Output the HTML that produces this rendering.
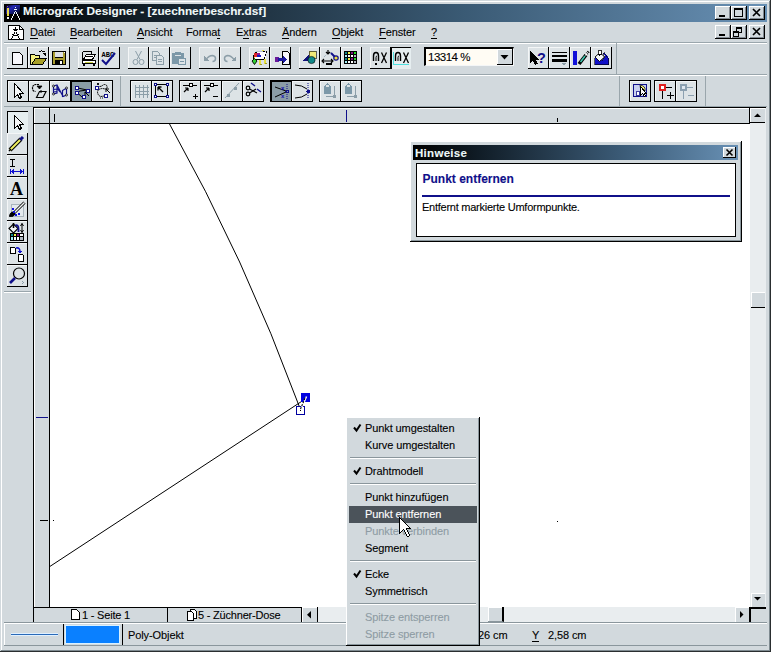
<!DOCTYPE html>
<html><head><meta charset="utf-8">
<style>
*{margin:0;padding:0;box-sizing:border-box}
html,body{width:771px;height:652px;overflow:hidden;background:#d2d9dd;font-family:"Liberation Sans",sans-serif;font-size:11px;color:#000}
.a{position:absolute}
.t{position:absolute;white-space:pre;line-height:1;letter-spacing:-0.1px;-webkit-text-stroke:0.1px currentColor}
u{text-decoration:none;border-bottom:1px solid #000;}
/* toolbar row1 buttons: dark right/bottom */
.b1{position:absolute;width:21px;height:22px;background:#dde3e6;border-right:1px solid #000;border-bottom:1px solid #000;box-shadow:inset 1px 1px #f4f6f7}
/* row2 buttons: full dark border */
.b2{position:absolute;width:22px;height:22px;background:#dde3e6;border:1px solid #000;box-shadow:inset 1px 1px #f4f6f7}
.pr{background:#8a9ca6;box-shadow:inset 1px 1px #000}
.tb{position:absolute;width:16px;height:14px;background:#d2d9dd;border-right:1px solid #000;border-bottom:1px solid #000;box-shadow:inset 1px 1px #fff, inset -1px -1px #808890}
svg{position:absolute;left:0;top:0;overflow:visible}
</style></head><body>
<!-- window frame -->
<div class="a" style="left:0;top:0;width:771px;height:652px;border-left:1px solid #d2d9dd;border-top:1px solid #d2d9dd;box-shadow:inset 1px 1px #fff"></div>
<div class="a" style="left:770px;top:0;width:1px;height:652px;background:#2a2e30"></div>
<div class="a" style="left:769px;top:1px;width:1px;height:650px;background:#7e8a90"></div>
<div class="a" style="left:0;top:651px;width:771px;height:1px;background:#2a2e30"></div>
<div class="a" style="left:1px;top:650px;width:769px;height:1px;background:#7e8a90"></div>

<!-- title bar -->
<div class="a" style="left:4px;top:4px;width:763px;height:18px;background:linear-gradient(90deg,#000 0%,#0a1218 10%,#3a5a74 60%,#6890b4 100%)"></div>
<div class="t" style="left:23px;top:6px;font-weight:bold;font-size:11.8px;color:#f0f8f8;letter-spacing:0">Micrografx Designer - [zuechnerbeschr.dsf]</div>


<!-- title icon -->
<svg width="771" height="652" shape-rendering="crispEdges">
<defs><linearGradient id="tig" x1="0" y1="0" x2="1" y2="1"><stop offset="0" stop-color="#000"/><stop offset="0.35" stop-color="#2428b8"/><stop offset="0.7" stop-color="#101860"/><stop offset="1" stop-color="#000"/></linearGradient></defs>
<rect x="5" y="5" width="16" height="16" fill="#000"/>
<rect x="6" y="5" width="14" height="9" fill="url(#tig)"/>
<rect x="7" y="8" width="2" height="8" fill="#e8d848"/>
<rect x="7" y="6" width="1" height="1" fill="#a040a0"/>
<rect x="7" y="17" width="2" height="2" fill="#f0f0f0"/>
<rect x="15" y="7" width="1" height="1" fill="#f0f8f8"/>
<rect x="14" y="9" width="3" height="1" fill="#f0f8f8"/>
<g fill="#f0f8f8"><rect x="15" y="11" width="1" height="1"/><rect x="14" y="12" width="1" height="1"/><rect x="14" y="13" width="1" height="1"/><rect x="13" y="15" width="1" height="1"/><rect x="12" y="17" width="1" height="1"/><rect x="11" y="19" width="1" height="1"/><rect x="16" y="12" width="1" height="1"/><rect x="16" y="13" width="1" height="1"/><rect x="17" y="15" width="1" height="1"/><rect x="18" y="17" width="1" height="1"/><rect x="19" y="19" width="1" height="1"/><rect x="13" y="14" width="1" height="1"/><rect x="17" y="14" width="1" height="1"/><rect x="12" y="16" width="1" height="1"/><rect x="18" y="16" width="1" height="1"/><rect x="11" y="18" width="1" height="1"/><rect x="19" y="18" width="1" height="1"/></g>
</svg>
<!-- title buttons -->
<div class="tb" style="left:715px;top:6px"></div>
<div class="tb" style="left:731px;top:6px"></div>
<div class="tb" style="left:749px;top:6px"></div>
<div class="tb" style="left:715px;top:25px"></div>
<div class="tb" style="left:731px;top:25px"></div>
<div class="tb" style="left:749px;top:25px"></div>
<svg width="771" height="652" shape-rendering="crispEdges">
<rect x="719" y="15" width="6" height="2" fill="#000"/>
<rect x="719" y="34" width="6" height="2" fill="#000"/>
<path d="M734.5,8.5 h8 v8 h-8z" fill="none" stroke="#000"/><rect x="734" y="8" width="9" height="2" fill="#000"/>
<path d="M736.5,27.5 h5 v5 h-5z" fill="none" stroke="#000"/><rect x="736" y="27" width="6" height="2" fill="#000"/>
<path d="M733.5,31.5 h5 v5 h-5z" fill="#d2d9dd" stroke="#000"/><rect x="733" y="31" width="6" height="2" fill="#000"/>
</svg>
<svg width="771" height="652"><path d="M753,9 L760,16 M760,9 L753,16" stroke="#000" stroke-width="1.7"/><path d="M753,28 L760,35 M760,28 L753,35" stroke="#000" stroke-width="1.7"/></svg>
<!-- menu doc icon -->
<svg width="771" height="652" shape-rendering="crispEdges">
<path d="M8.5,25.5 H19.5 L23.5,29.5 V39.5 H8.5 Z" fill="#fff" stroke="#000"/>
<path d="M19.5,25.5 V29.5 H23.5" fill="none" stroke="#000"/>
<g fill="#000">
<rect x="15" y="27" width="1" height="2"/><rect x="13" y="29" width="5" height="1"/><rect x="14" y="30" width="3" height="1"/>
<rect x="14" y="32" width="1" height="2"/><rect x="16" y="32" width="1" height="2"/>
<rect x="13" y="34" width="1" height="2"/><rect x="17" y="34" width="1" height="2"/>
<rect x="12" y="36" width="1" height="2"/><rect x="18" y="36" width="1" height="2"/>
<rect x="11" y="38" width="1" height="1"/><rect x="19" y="38" width="1" height="1"/>
<rect x="14" y="35" width="3" height="1"/><rect x="12" y="34" width="1" height="1"/><rect x="18" y="34" width="1" height="1"/>
</g>
</svg>
<!-- combobox -->
<div class="a" style="left:424px;top:47px;width:90px;height:19px;background:#fffcf4;border-top:2px solid #000;border-left:2px solid #000;border-right:1px solid #f4f6f7;border-bottom:1px solid #f4f6f7"></div>
<div class="a" style="left:497px;top:49px;width:16px;height:16px;background:#d2d9dd;border-right:1px solid #000;border-bottom:1px solid #000;box-shadow:inset 1px 1px #fff"></div>
<svg width="771" height="652"><path d="M500.5,55 L508.5,55 L504.5,59.5Z" fill="#000"/></svg>
<div class="t" style="left:428px;top:52px;font-size:11.5px;letter-spacing:-0.5px">13314 %</div>

<!-- menu bar -->
<div class="t" style="left:30px;top:27px"><u>D</u>atei</div>
<div class="t" style="left:70px;top:27px"><u>B</u>earbeiten</div>
<div class="t" style="left:137px;top:27px"><u>A</u>nsicht</div>
<div class="t" style="left:186px;top:27px">Forma<u>t</u></div>
<div class="t" style="left:236px;top:27px">E<u>x</u>tras</div>
<div class="t" style="left:282px;top:27px"><u>Ä</u>ndern</div>
<div class="t" style="left:332px;top:27px"><u>O</u>bjekt</div>
<div class="t" style="left:379px;top:27px"><u>F</u>enster</div>
<div class="t" style="left:431px;top:27px"><u>?</u></div>
<div class="a" style="left:4px;top:42px;width:763px;height:1px;background:#9aa6ac"></div>
<div class="a" style="left:4px;top:43px;width:763px;height:1px;background:#fff"></div>

<!-- toolbar row 1 -->
<div class="a" style="left:616px;top:43px;width:1px;height:32px;background:#9aa6ac"></div>
<div class="a" style="left:4px;top:74px;width:763px;height:1px;background:#9aa6ac"></div>
<div class="a" style="left:4px;top:75px;width:763px;height:1px;background:#fff"></div>

<!-- toolbar row 2 -->
<div class="a" style="left:120px;top:76px;width:1px;height:31px;background:#9aa6ac"></div>
<div class="a" style="left:619px;top:76px;width:1px;height:31px;background:#9aa6ac"></div>
<div class="a" style="left:705px;top:76px;width:1px;height:31px;background:#9aa6ac"></div>
<div class="a" style="left:4px;top:106px;width:763px;height:1px;background:#9aa6ac"></div>

<div class="b1" style="left:7px;top:47px"></div>
<div class="b1" style="left:28px;top:47px"></div>
<div class="b1" style="left:49px;top:47px"></div>
<div class="b1" style="left:78px;top:47px"></div>
<div class="b1" style="left:99px;top:47px"></div>
<div class="b1" style="left:128px;top:47px"></div>
<div class="b1" style="left:149px;top:47px"></div>
<div class="b1" style="left:170px;top:47px"></div>
<div class="b1" style="left:199px;top:47px"></div>
<div class="b1" style="left:220px;top:47px"></div>
<div class="b1" style="left:249px;top:47px"></div>
<div class="b1" style="left:270px;top:47px"></div>
<div class="b1" style="left:299px;top:47px"></div>
<div class="b1" style="left:320px;top:47px"></div>
<div class="b1" style="left:341px;top:47px"></div>
<div class="b1" style="left:370px;top:47px"></div>
<div class="a" style="left:390px;top:47px;width:21px;height:22px;background:#e6eef0;border-left:2px solid #000;border-top:1px solid #000"></div>
<div class="b1" style="left:528px;top:47px"></div>
<div class="b1" style="left:549px;top:47px"></div>
<div class="b1" style="left:570px;top:47px"></div>
<div class="b1" style="left:591px;top:47px"></div>
<div class="b2" style="left:7px;top:80px"></div>
<div class="b2" style="left:28px;top:80px"></div>
<div class="b2" style="left:49px;top:80px"></div>
<div class="b2 pr" style="left:70px;top:80px"></div>
<div class="b2" style="left:91px;top:80px"></div>
<div class="b2" style="left:130px;top:80px"></div>
<div class="b2" style="left:151px;top:80px"></div>
<div class="b2" style="left:179px;top:80px"></div>
<div class="b2" style="left:200px;top:80px"></div>
<div class="b2" style="left:221px;top:80px"></div>
<div class="b2" style="left:242px;top:80px"></div>
<div class="b2 pr" style="left:270px;top:80px"></div>
<div class="b2" style="left:291px;top:80px"></div>
<div class="b2" style="left:319px;top:80px"></div>
<div class="b2" style="left:340px;top:80px"></div>
<div class="b2" style="left:629px;top:80px"></div>
<div class="b2" style="left:654px;top:80px"></div>
<div class="b2" style="left:675px;top:80px"></div>
<div class="a" style="left:7px;top:111px;width:21px;height:22px;background:#e6eef0;border-left:1px solid #000;border-top:1px solid #000"></div>
<div class="b1" style="left:7px;top:133px"></div>
<div class="b1" style="left:7px;top:155px"></div>
<div class="b1" style="left:7px;top:177px"></div>
<div class="b1" style="left:7px;top:199px"></div>
<div class="b1" style="left:7px;top:221px"></div>
<div class="b1" style="left:7px;top:243px"></div>
<div class="b1" style="left:7px;top:265px"></div>
<!-- left toolbox frame -->
<div class="a" style="left:4px;top:291px;width:27px;height:1px;background:#9aa6ac"></div>
<div class="a" style="left:4px;top:292px;width:27px;height:1px;background:#fff"></div>

<!--ICONS1-->
<svg width="771" height="652" shape-rendering="crispEdges" style="left:0;top:0">
<!-- ROW 1 -->
<!-- new -->
<path d="M12.5,52.5 H19.5 L22.5,55.5 V64.5 H12.5 Z" fill="#f8f8fc" stroke="#000"/>
<!-- open -->
<path d="M30.5,54.5 H34.5 L35.5,55.5 H39.5 V58.5 H35.5 L31.5,64.5 H30.5 Z" fill="#f4f080" stroke="#000"/>
<path d="M31.5,64.5 L35.5,58.5 H46.5 L42.5,64.5 Z" fill="#a8a028" stroke="#000"/>
<path d="M38.5,52.5 Q41,49.5 44.5,52" fill="none" stroke="#000"/>
<path d="M42,53 H46 V56 Z" fill="#000"/>
<!-- save -->
<rect x="52.5" y="51.5" width="13" height="13" fill="#a89c30" stroke="#000"/>
<rect x="55" y="52" width="8" height="5" fill="#dde0e4"/>
<rect x="55" y="57" width="8" height="1" fill="#000"/>
<rect x="55" y="60" width="8" height="5" fill="#000"/>
<rect x="60" y="61" width="2" height="3" fill="#fff"/>
<rect x="64" y="52" width="1" height="1" fill="#fff"/>
<!-- print -->
<path d="M82.5,51.5 H91.5 V54.5" fill="none" stroke="#000"/>
<path d="M82.5,51.5 V62.5" fill="none" stroke="#000"/>
<path d="M86.5,54.5 H95.5 L92.5,59.5 H83.5 Z" fill="#fff" stroke="#000"/>
<rect x="86" y="56" width="7" height="1" fill="#000"/>
<path d="M82.5,60.5 H95.5 V63.5 H82.5 Z" fill="#fff" stroke="#000"/>
<rect x="85" y="62" width="8" height="1" fill="#c8d040"/>
<rect x="83" y="64" width="2" height="2" fill="#000"/><rect x="93" y="64" width="2" height="2" fill="#000"/>
<!-- spell -->
<text x="101.5" y="56.5" font-family="Liberation Mono" font-weight="bold" font-size="7" fill="#000" shape-rendering="auto">ABC</text>
<path d="M102,60 L106,64 L115,53" fill="none" stroke="#10108a" stroke-width="2" shape-rendering="auto"/>
<!-- cut (disabled) -->
<g fill="none" stroke="#8c9ea8" shape-rendering="auto">
<path d="M135.5,51 L140,59.5 M141.5,51 L137,59.5"/>
<circle cx="135.5" cy="62" r="2.5"/><circle cx="141.5" cy="62" r="2.5"/>
</g>
<!-- copy (disabled) -->
<path d="M152.5,51.5 H157.5 L159.5,53.5 V60.5 H152.5 Z" fill="#dde3e6" stroke="#8c9ea8"/>
<path d="M156.5,55.5 H161.5 L163.5,57.5 V64.5 H156.5 Z" fill="#dde3e6" stroke="#8c9ea8"/>
<rect x="154" y="55" width="3" height="1" fill="#8c9ea8"/><rect x="154" y="57" width="2" height="1" fill="#8c9ea8"/>
<rect x="158" y="59" width="4" height="1" fill="#8c9ea8"/><rect x="158" y="61" width="4" height="1" fill="#8c9ea8"/>
<!-- paste (disabled) -->
<path d="M172.5,53.5 H175.5 V52.5 H180.5 V53.5 H183.5 V63.5 H172.5 Z" fill="#7c98a8" stroke="#7c98a8"/>
<rect x="175" y="55" width="6" height="1" fill="#dde3e6"/>
<rect x="178.5" y="58.5" width="7" height="6" fill="#dde3e6" stroke="#7c98a8"/>
<rect x="180" y="61" width="4" height="1" fill="#7c98a8"/>
<!-- undo / redo (disabled) -->
<g fill="none" stroke="#8c9ea8" stroke-width="1.5" shape-rendering="auto">
<path d="M206,59.5 Q209,55.5 212.5,55.5 Q215.5,56 215.5,58.5 Q215.5,61.5 212.5,61.5"/>
<path d="M234,59.5 Q231,55.5 227.5,55.5 Q224.5,56 224.5,58.5 Q224.5,61.5 227.5,61.5"/>
</g>
<path d="M204,56 L204,61 L209,61 Z" fill="#8c9ea8"/>
<path d="M236,56 L236,61 L231,61 Z" fill="#8c9ea8"/>
<!-- import -->
<rect x="255" y="52" width="11" height="7" fill="#fff"/>
<rect x="256" y="51" width="9" height="1" fill="#b8c4cc"/>
<rect x="255" y="59" width="9" height="1" fill="#000"/>
<rect x="266" y="51" width="1" height="2" fill="#000"/><rect x="265" y="54" width="1" height="2" fill="#000"/><rect x="264" y="57" width="1" height="2" fill="#000"/>
<rect x="254" y="53" width="4" height="4" fill="#e02828"/>
<rect x="255" y="52" width="2" height="1" fill="#000"/>
<rect x="253" y="55" width="1" height="5" fill="#000"/>
<rect x="254" y="57" width="1" height="2" fill="#f0d060"/>
<rect x="257" y="53" width="3" height="2" fill="#901890"/>
<rect x="257" y="55" width="4" height="2" fill="#1818c0"/>
<path d="M254.5,58.5 L257,61 L254.5,64.5 L252,61 Z" fill="#30d030" stroke="#000" stroke-width="0.9" shape-rendering="auto"/>
<rect x="259" y="60" width="2" height="5" fill="#e8e040"/><rect x="260" y="64" width="2" height="1" fill="#a0a020"/>
<rect x="264" y="59" width="2" height="5" fill="#e8e040"/><rect x="265" y="63" width="2" height="1" fill="#a0a020"/>
<rect x="262" y="50" width="2" height="1" fill="#e8e040"/><rect x="263" y="51" width="2" height="1" fill="#000"/>
<!-- export -->
<path d="M282.5,51.5 H287.5 L289.5,53.5 V64.5 H282.5 Z" fill="#f8f8fc" stroke="#000"/>
<rect x="275" y="57" width="4" height="5" fill="#6a1a9a"/>
<path d="M278,58 H283 V56 L287,59.5 L283,63 V61 H278 Z" fill="#1a1aa0"/>
<!-- shapes -->
<rect x="309" y="51" width="7" height="7" fill="#f0e878" stroke="#000" stroke-width="0.6"/>
<path d="M302,61 L309,55 V61 Z" fill="#10107a"/>
<circle cx="311.5" cy="60" r="3.6" fill="#108888" stroke="#000" stroke-width="0.6" shape-rendering="auto"/>
<!-- transform -->
<g shape-rendering="auto">
<path d="M324,57 L329,52 L333,54" fill="none" stroke="#8aa0b0" stroke-width="1" stroke-dasharray="1,1"/>
<path d="M328,50 v4 M326,52 l2,2 l2,-2" fill="none" stroke="#000" stroke-width="1.2"/>
<path d="M331,53 L335,57" stroke="#10108a" stroke-width="2"/>
<circle cx="336" cy="58" r="2.2" fill="#f0e040" stroke="#10108a" stroke-width="1.2"/>
<path d="M323,61 h9 M324,59 l-2,2 l2,2 M331,59 l2,2 l-2,2" fill="none" stroke="#000" stroke-width="1.1"/>
<rect x="326" y="63" width="6" height="2" fill="#000"/>
</g>
<!-- color grid -->
<rect x="344" y="51" width="13" height="13" fill="#000"/>
<g>
<rect x="345" y="52" width="2" height="2" fill="#108888"/><rect x="348" y="52" width="2" height="2" fill="#f0f040"/><rect x="351" y="52" width="2" height="2" fill="#801080"/><rect x="354" y="52" width="2" height="2" fill="#20e020"/>
<rect x="345" y="55" width="2" height="2" fill="#a0f0f8"/><rect x="348" y="55" width="2" height="2" fill="#fff"/><rect x="351" y="55" width="2" height="2" fill="#fff"/><rect x="354" y="55" width="2" height="2" fill="#b0b8c0"/>
<rect x="345" y="58" width="2" height="2" fill="#108888"/><rect x="348" y="58" width="2" height="2" fill="#f0f040"/><rect x="351" y="58" width="2" height="2" fill="#801080"/><rect x="354" y="58" width="2" height="2" fill="#20e020"/>
<rect x="345" y="61" width="2" height="2" fill="#a0f0f8"/><rect x="348" y="61" width="2" height="2" fill="#fff"/><rect x="351" y="61" width="2" height="2" fill="#fff"/><rect x="354" y="61" width="2" height="2" fill="#b0b8c0"/>
</g>
<!-- @X -->
<g fill="none" stroke="#000" shape-rendering="auto">
<path d="M373.5,61 V56 Q373.5,52.5 376,52.5 Q378.5,52.5 378.5,56 V61" stroke-width="1.4"/>
<path d="M376,61 V57.5 Q376,56 377,56" stroke-width="1"/>
<path d="M381.5,52.5 L386.5,63 M386.5,52.5 L381.5,63" stroke-width="1.3"/>
<path d="M395.5,61 V56 Q395.5,52.5 398,52.5 Q400.5,52.5 400.5,56 V61" stroke-width="1.4"/>
<path d="M398,61 V57.5 Q398,56 399,56" stroke-width="1"/>
<path d="M403.5,52.5 L408.5,63 M408.5,52.5 L403.5,63" stroke-width="1.3"/>
</g>
<rect x="375" y="63" width="2" height="2" fill="#000"/>
<rect x="393" y="52" width="1" height="13" fill="#50e0e0"/><rect x="394" y="64" width="15" height="1" fill="#50e0e0"/>
<!-- help arrow -->
<path d="M530.5,51.5 V62.5 L533,60 L535.5,64.5 L537,63.5 L535,59 L538,59 Z" fill="#000" stroke="#000"/>
<text x="537" y="62.5" font-family="Liberation Sans" font-weight="bold" font-size="14.5" fill="#10108a" shape-rendering="auto">?</text>
<!-- line widths -->
<rect x="552" y="52" width="15" height="1" fill="#000"/>
<rect x="552" y="55" width="15" height="2" fill="#000"/>
<rect x="552" y="59" width="15" height="3" fill="#000"/>
<path d="M561,63 h5 l-2.5,2.5z" fill="#8c9ea8"/>
<!-- pen -->
<rect x="573" y="51" width="4" height="14" fill="#1010d8"/>
<g shape-rendering="auto">
<path d="M579,64 L586,55" stroke="#000" stroke-width="3.6"/>
<path d="M580.5,62 L585,56" stroke="#40c8b0" stroke-width="1.6"/>
<path d="M585.5,55.5 L589,51" stroke="#000" stroke-width="2.6" stroke-dasharray="1,1"/>
<path d="M585.5,55.5 L587,53.5" stroke="#fff" stroke-width="1.5"/>
</g>
<!-- bucket -->
<path d="M594.5,57.5 L599,57.5 L602,61 L605,56 L603,53.5 L604.5,52.5 L608.5,57.5 V64.5 H594.5 Z" fill="#1010c8" stroke="#000" stroke-width="0.6"/>
<path d="M595,57 L600,52.5 L604.5,57 L599.5,61.5 Z" fill="#f4f6f8" stroke="#000" stroke-width="0.9" shape-rendering="auto"/>
<rect x="598" y="50" width="3" height="4" fill="#fff" stroke="#000" stroke-width="0.8"/>
<path d="M597,53.5 h5 l-2.5,2.5z" fill="#000"/>
</svg>

<!--/ICONS1-->
<!--ICONS2-->
<svg width="771" height="652" shape-rendering="crispEdges" style="left:0;top:0">
<!-- ROW 2 -->
<!-- arrow -->
<path d="M14.5,83.5 V97.5 L17.5,94.5 L19.5,98.5 L21.5,97.5 L19.5,93.5 L23.5,93.5 Z" fill="#f4f6f7" stroke="#000"/>
<!-- rotate -->
<g shape-rendering="auto" fill="none" stroke="#000">
<path d="M39,84.5 H35.5 Q32.5,85 32.5,88 Q32.5,91.5 35.5,91.5" stroke-width="1.2" stroke-dasharray="2,0.6"/>
<path d="M37,86 H42 L39.5,89 Z" fill="#000" stroke-width="0.8"/>
<path d="M36.5,97.5 L39.5,91.5 H46 L43,97.5 Z" fill="#dde3e6" stroke-width="1.2"/>
<path d="M41,90 V93" stroke-width="1"/>
</g>
<!-- 3d envelope -->
<g shape-rendering="auto" fill="none" stroke="#10108a" stroke-width="1.2">
<path d="M53.5,86 L57,85 L63,96.5 L66.5,95 V88 L62.5,90.5 V97 M53.5,86 V94 L57,93 V85 M53.5,89.5 L57,89 M53.5,92 L57,91.5 M57,88 L60,92"/>
</g>
<g fill="#fff" stroke="#000" stroke-width="0.8" shape-rendering="auto">
<circle cx="53.5" cy="86" r="1"/><circle cx="66.5" cy="88" r="1"/><circle cx="53.5" cy="94" r="1"/><circle cx="66.5" cy="95" r="1"/>
</g>
<!-- nodes (pressed) -->
<g shape-rendering="auto" fill="none" stroke="#000" stroke-width="1">
<path d="M77,87.5 L80,88.5 L87,90 M77,92.5 L80,91 L87,90 M77.5,93 L82,97"/>
<path d="M89,96 L85,92 M85,92 v3 M85,92 h3"/>
</g>
<rect x="75.5" y="86.5" width="3" height="3" fill="#fff" stroke="#10108a" stroke-width="1.2"/>
<rect x="86.5" y="89.5" width="3" height="3" fill="#fff" stroke="#10108a" stroke-width="1.2"/>
<rect x="75.5" y="91.5" width="3" height="3" fill="#fff" stroke="#10108a" stroke-width="1.2"/>
<rect x="82.5" y="95.5" width="3" height="3" fill="#fff" stroke="#10108a" stroke-width="1.2"/>
<!-- circle nodes -->
<g shape-rendering="auto" fill="none" stroke="#000" stroke-width="1">
<path d="M98,87 L102,86 Q103,84.5 105,84.5 Q107.5,85 107,88 Q106,89.5 103,88.5 Q98,88.5 97.5,92 Q98,96 101,96.5 L104,96" stroke-dasharray="1.6,0.5"/>
<path d="M110,93 L106,89 M106,89 v3 M106,89 h3"/>
<path d="M97,83 L99,85 M99,83 L97,85 M100,98 h1 M102,98 h1" stroke-width="0.9"/>
</g>
<rect x="95.5" y="86.5" width="3" height="3" fill="#fff" stroke="#10108a" stroke-width="1.2"/>
<rect x="104.5" y="94.5" width="3" height="3" fill="#fff" stroke="#10108a" stroke-width="1.2"/>
<!-- grid disabled -->
<g fill="none" stroke="#8c9ea8">
<path d="M135.5,84.5 V97.5 M139.5,84.5 V97.5 M143.5,84.5 V97.5 M147.5,84.5 V97.5 M134.5,87.5 H148.5 M134.5,91.5 H148.5 M134.5,94.5 H148.5"/>
</g>
<!-- box select -->
<rect x="155.5" y="84.5" width="12" height="12" fill="none" stroke="#000"/>
<path d="M158,87 L163,92 M158,87 v3.5 M158,87 h3.5" fill="none" stroke="#000" stroke-width="1.3" shape-rendering="auto"/>
<rect x="154.5" y="83.5" width="2" height="2" fill="#fff" stroke="#10108a"/><rect x="166.5" y="83.5" width="2" height="2" fill="#fff" stroke="#10108a"/>
<rect x="154.5" y="95.5" width="2" height="2" fill="#fff" stroke="#10108a"/><rect x="166.5" y="95.5" width="2" height="2" fill="#fff" stroke="#10108a"/>
<!-- add point -->
<rect x="183" y="85" width="14" height="1" fill="#000"/>
<rect x="189.5" y="83.5" width="3" height="3" fill="#fff" stroke="#000"/>
<path d="M184,92 L188,88 M188,88 h-3 M188,88 v3" fill="none" stroke="#000" stroke-width="1.2" shape-rendering="auto"/>
<rect x="193" y="96" width="5" height="1" fill="#000"/><rect x="195" y="94" width="1" height="5" fill="#000"/>
<!-- remove point -->
<rect x="204" y="85" width="14" height="1" fill="#000"/>
<rect x="210.5" y="83.5" width="3" height="3" fill="#fff" stroke="#000"/>
<path d="M205,92 L209,88 M209,88 h-3 M209,88 v3" fill="none" stroke="#000" stroke-width="1.2" shape-rendering="auto"/>
<rect x="213" y="96" width="5" height="1" fill="#000"/>
<!-- line disabled -->
<path d="M225,98 L239,83" stroke="#8c9ea8" shape-rendering="auto"/>
<rect x="227" y="94" width="3" height="3" fill="#8c9ea8"/><rect x="234" y="87" width="3" height="3" fill="#8c9ea8"/>
<!-- scissors -->
<g shape-rendering="auto">
<circle cx="248" cy="88" r="1.8" fill="none" stroke="#000" stroke-width="1.2"/>
<circle cx="248" cy="94" r="1.8" fill="none" stroke="#000" stroke-width="1.2"/>
<path d="M249.5,89 L257,93 M249.5,93 L256,89" stroke="#000" stroke-width="1.1"/>
<path d="M251,83 L255,86 M257,89 L261,92" stroke="#10108a" stroke-width="1.4"/>
</g>
<!-- pressed sym -->
<g shape-rendering="auto" fill="none">
<path d="M275,87 L286,91 M275,97 L286,92" stroke="#000"/>
<path d="M287,84 V99" stroke="#10108a" stroke-dasharray="1,1"/>
</g>
<circle cx="287.5" cy="91.5" r="1.5" fill="none" stroke="#10108a"/>
<text x="281" y="90" font-size="6" fill="#1010b0" font-family="Liberation Sans" font-weight="bold">x</text>
<text x="281" y="98" font-size="6" fill="#1010b0" font-family="Liberation Sans" font-weight="bold">x</text>
<!-- curve -->
<g shape-rendering="auto" fill="none">
<path d="M295,85 Q302,85 307,89 M295,98 Q302,98 307,94" stroke="#000"/>
<path d="M308,83 V99" stroke="#10108a" stroke-dasharray="1,1"/>
</g>
<circle cx="308.5" cy="91.5" r="1.5" fill="#10108a" stroke="#10108a"/>
<!-- locks disabled -->
<g>
<path d="M324.5,86.5 L327.5,83.5 L330.5,86.5 V93.5 H324.5 Z" fill="#7c98a8" stroke="#7c98a8"/>
<rect x="326" y="85" width="3" height="2" fill="#dde3e6"/>
<path d="M334.5,86 V96.5 H326" fill="none" stroke="#8c9ea8"/>
<rect x="333" y="95" width="3" height="3" fill="#8c9ea8"/>
<path d="M345.5,86.5 L348.5,83.5 L351.5,86.5 V93.5 H345.5 Z" fill="#7c98a8" stroke="#7c98a8"/>
<rect x="347" y="85" width="3" height="2" fill="#dde3e6"/>
<path d="M355.5,86 V96.5 H347" fill="none" stroke="#8c9ea8"/>
<rect x="354" y="95" width="3" height="3" fill="#8c9ea8"/>
</g>
<!-- right toolbar -->
<rect x="633.5" y="84.5" width="13" height="12" fill="#c8d0f0" stroke="#10108a"/>
<rect x="636" y="91" width="3" height="4" fill="#fff" stroke="#10108a" stroke-width="0.8"/>
<path d="M640,85 Q646,86 645,91 L641,92 Z" fill="#f0e878" stroke="#000" stroke-width="0.7" shape-rendering="auto"/>
<path d="M640.5,86.5 V95.5 L642.5,93.5 L644.5,96.5 L645.5,95.5 L644,93 H646 Z" fill="#fff" stroke="#000"/>
<rect x="659" y="84" width="7" height="7" fill="#e02020"/>
<rect x="661" y="86" width="3" height="3" fill="#fff"/>
<rect x="662" y="91" width="1" height="8" fill="#000"/>
<rect x="666" y="87" width="6" height="1" fill="#000"/>
<rect x="667" y="95" width="7" height="1" fill="#000"/><rect x="670" y="92" width="1" height="7" fill="#000"/>
<rect x="680" y="84" width="7" height="7" fill="#8ca0b0"/>
<rect x="682" y="86" width="3" height="3" fill="#e0e8f0"/>
<rect x="683" y="91" width="1" height="8" fill="#8ca0b0"/>
<rect x="687" y="87" width="6" height="1" fill="#8ca0b0"/>
<rect x="688" y="95" width="6" height="1" fill="#8ca0b0"/>

<!-- LEFT TOOLBOX -->
<path d="M14.5,115.5 V128.5 L17.5,125.5 L19.5,129.5 L21.5,128.5 L19.5,124.5 L23.5,124.5 Z" fill="#f4f6f7" stroke="#000"/>
<!-- pencil -->
<g shape-rendering="auto">
<path d="M10,150 L21,139" stroke="#000" stroke-width="4"/>
<path d="M10,150 L21,139" stroke="#f0f060" stroke-width="2"/>
<path d="M20,140 L23,137" stroke="#10108a" stroke-width="3"/>
<path d="M9,151 L11,149" stroke="#000" stroke-width="1.5"/>
</g>
<!-- dimension -->
<rect x="10" y="159" width="5" height="1" fill="#000"/><rect x="12" y="159" width="1" height="8" fill="#000"/><rect x="10" y="166" width="5" height="1" fill="#000"/>
<rect x="11" y="171" width="12" height="1" fill="#1010d0"/>
<path d="M11,171.5 L14,169 V174 Z M23,171.5 L20,169 V174 Z" fill="#1010d0"/>
<rect x="10" y="169" width="1" height="5" fill="#1010d0"/><rect x="23" y="169" width="1" height="5" fill="#1010d0"/>
<!-- A -->
<text x="10" y="194.5" font-family="Liberation Serif" font-weight="bold" font-size="18" fill="#000" shape-rendering="auto">A</text>
<!-- brush -->
<rect x="11.5" y="204.5" width="12" height="12" fill="#e4eaee" stroke="#aab6be"/>
<g shape-rendering="auto">
<path d="M14,213 L24.5,202.5" stroke="#000" stroke-width="3"/>
<path d="M14,213 L24.5,202.5" stroke="#f0f4f4" stroke-width="1.5"/>
<path d="M9.5,216.5 Q10,212 13,212 L15,214 Q14,217 9.5,216.5 Z" fill="#000" stroke="#000"/>
</g>
<rect x="12" y="208" width="2" height="2" fill="#1010e0"/><rect x="13" y="211" width="2" height="2" fill="#1010e0"/>
<rect x="18" y="213" width="2" height="2" fill="#1010e0"/><rect x="15" y="214" width="2" height="2" fill="#1010e0"/>
<!-- bucket palette -->
<g shape-rendering="auto">
<path d="M9,228.5 L13.5,224 L18,228.5 L13.5,233 Z" fill="#f4f6f8" stroke="#000" stroke-width="1.1"/>
<path d="M13.5,223 V228" stroke="#000" stroke-width="1.6"/>
<path d="M15,225.5 Q18.5,224 18.5,229 V232" fill="none" stroke="#10108a" stroke-width="1.8"/>
<path d="M22,223.5 V232.5" stroke="#000" stroke-width="1"/>
<path d="M20.5,226 L22,223.5 L23.5,226 M20.5,230 L22,232.5 L23.5,230" fill="none" stroke="#000" stroke-width="1"/>
</g>
<rect x="10" y="233" width="14" height="8" fill="#000"/>
<rect x="11" y="234" width="2" height="2" fill="#108888"/><rect x="14" y="234" width="2" height="2" fill="#f0f040"/><rect x="17" y="234" width="2" height="2" fill="#801080"/><rect x="20" y="234" width="3" height="2" fill="#fff"/>
<rect x="11" y="237" width="2" height="3" fill="#a0f0f8"/><rect x="14" y="237" width="2" height="3" fill="#fff"/><rect x="17" y="237" width="2" height="3" fill="#fff"/><rect x="20" y="237" width="3" height="3" fill="#b0b8c0"/>
<!-- pages -->
<path d="M10.5,247.5 H14.5 L15.5,248.5 V253.5 H10.5 Z" fill="#fff" stroke="#000"/>
<path d="M18.5,254.5 H22.5 L23.5,255.5 V261.5 H18.5 Z" fill="#fff" stroke="#000"/>
<path d="M16,248 Q20,247 20,252" fill="none" stroke="#1010d0" stroke-width="1.6" shape-rendering="auto"/>
<path d="M18,251 h4 l-2,3z" fill="#1010d0"/>
<!-- magnifier -->
<circle cx="19" cy="273.5" r="5.5" fill="#dde3e6" stroke="#000" stroke-width="1.2" shape-rendering="auto"/>
<path d="M10,283 L15,278" stroke="#10108a" stroke-width="2.6" shape-rendering="auto"/>
<path d="M22,281 l1.5,1.5 l-1.5,1.5" fill="none" stroke="#8c9ea8"/>
</svg>

<!--/ICONS2-->
<!-- canvas frame -->
<div class="a" style="left:33px;top:107px;width:733px;height:501px;background:#000"></div>
<div class="a" style="left:34px;top:108px;width:15px;height:15px;background:#d2d9dd;box-shadow:inset 1px 1px #fff"></div>
<div class="a" style="left:50px;top:108px;width:699px;height:15px;background:#d2d9dd;box-shadow:inset 0 1px #fff"></div>
<div class="a" style="left:34px;top:124px;width:15px;height:483px;background:#d2d9dd;box-shadow:inset 1px 0 #fff"></div>
<div class="a" style="left:50px;top:124px;width:700px;height:483px;background:#fff"></div>
<div class="a" style="left:750px;top:108px;width:16px;height:499px;background:#e9edef"></div>

<!-- ruler ticks -->
<div class="a" style="left:54px;top:114px;width:1px;height:8px;background:#000"></div>
<div class="a" style="left:346px;top:110px;width:1px;height:12px;background:#10108a"></div>
<div class="a" style="left:557px;top:118px;width:1px;height:4px;background:#000"></div>
<div class="a" style="left:36px;top:417px;width:12px;height:1px;background:#10108a"></div>
<div class="a" style="left:40px;top:520px;width:8px;height:1px;background:#000"></div>
<div class="a" style="left:53px;top:520px;width:1px;height:1px;background:#000"></div>
<div class="a" style="left:557px;top:521px;width:1px;height:1px;background:#000"></div>
<!-- drawing -->
<svg width="771" height="652" style="left:0;top:0">
<defs><clipPath id="cv"><rect x="50" y="124" width="699" height="483"/></clipPath></defs>
<g clip-path="url(#cv)" fill="none" stroke="#000" stroke-width="1">
<path d="M169,123 Q245,259 299.5,407"/>
<path d="M301.5,401.5 L30,579.5"/>
</g>
<rect x="301" y="393" width="9" height="9" fill="#0000e0"/>
<rect x="296.5" y="406.5" width="8" height="8" fill="#fff" stroke="#0000a0"/>
<path d="M301.5,408 L306.5,396.5" stroke="#fff" stroke-width="1.6" fill="none"/>
<path d="M300.5,409 L305.5,397" stroke="#000" stroke-dasharray="2,1.2" fill="none" stroke-width="1.1"/>
<rect x="300" y="410" width="1" height="1" fill="#000"/>
</svg>
<!-- vertical scrollbar -->
<div class="a" style="left:750px;top:108px;width:15px;height:15px;background:#d2d9dd;border-bottom:1px solid #000;box-shadow:inset 1px 1px #fff"></div>
<div class="a" style="left:751px;top:292px;width:14px;height:16px;background:#d2d9dd;border-bottom:1px solid #000;box-shadow:inset 1px 1px #fff"></div>
<div class="a" style="left:751px;top:593px;width:14px;height:14px;background:#d2d9dd;box-shadow:inset 1px 1px #fff"></div>
<svg width="771" height="652"><path d="M754,117 L761,117 L757.5,113.5Z" fill="#000"/><path d="M754,597 L761,597 L757.5,600.5Z" fill="#000"/></svg>
<!-- tab bar + h scrollbar -->
<div class="a" style="left:33px;top:607px;width:733px;height:15px;background:#e9edef"></div>
<div class="a" style="left:33px;top:607px;width:269px;height:15px;background:#d2d9dd;border-left:1px solid #000;border-top:1px solid #000"></div>
<div class="a" style="left:167px;top:608px;width:1px;height:14px;background:#000"></div>
<div class="a" style="left:301px;top:608px;width:1px;height:14px;background:#000"></div>
<div class="a" style="left:302px;top:607px;width:16px;height:15px;background:#d2d9dd;border-right:1px solid #000;box-shadow:inset 1px 1px #fff"></div>
<div class="a" style="left:488px;top:607px;width:16px;height:15px;background:#d2d9dd;border-right:2px solid #000;border-bottom:1px solid #8a969c;box-shadow:inset 1px 1px #fff"></div>
<div class="a" style="left:735px;top:607px;width:14px;height:15px;background:#d2d9dd;box-shadow:inset 1px 1px #fff"></div>
<div class="a" style="left:749px;top:607px;width:17px;height:15px;background:#d2d9dd;border-left:2px solid #000;border-top:2px solid #000"></div>
<svg width="771" height="652"><path d="M311,611 L311,618.5 L307,614.75Z" fill="#000"/><path d="M740,611 L740,618 L743.5,614.5Z" fill="#000"/></svg>
<div class="t" style="left:82px;top:610px;font-size:11px;letter-spacing:-0.2px">1 - Seite 1</div>
<div class="t" style="left:198px;top:610px;font-size:11px;letter-spacing:-0.2px">5 - Züchner-Dose</div>


<!-- status bar -->
<div class="a" style="left:4px;top:622px;width:763px;height:1px;background:#8a969c"></div>
<div class="a" style="left:4px;top:623px;width:763px;height:23px;background:#d2d9dd;border-bottom:1px solid #8a969c;box-shadow:inset 1px 1px #fff"></div>
<div class="a" style="left:63px;top:624px;width:1px;height:21px;background:#000"></div>
<div class="a" style="left:122px;top:624px;width:1px;height:21px;background:#000"></div>
<div class="a" style="left:11px;top:634px;width:47px;height:1px;background:#2a6ab8;box-shadow:0 -1px #e0f0ff, 0 1px #e0f0ff"></div>
<div class="a" style="left:65px;top:625px;width:55px;height:19px;background:#0a80ff;border:1px solid #d8f0ff"></div>
<svg width="771" height="652" shape-rendering="crispEdges">
<path d="M71.5,609.5 H76.5 L79.5,612.5 V619.5 H71.5 Z" fill="#fff" stroke="#000"/>
<path d="M190.5,609.5 H194.5 L196.5,611.5 V618.5 H190.5 Z" fill="#fff" stroke="#000"/>
<path d="M187.5,611.5 H191.5 L193.5,613.5 V620.5 H187.5 Z" fill="#fff" stroke="#000"/>
</svg>
<div class="t" style="left:128px;top:630px">Poly-Objekt</div>
<div class="t" style="left:478px;top:630px">26 cm</div>
<div class="t" style="left:532px;top:630px"><u>Y</u></div>
<div class="t" style="left:548px;top:630px">2,58 cm</div>

<!-- Hinweise dialog -->
<div class="a" style="left:410px;top:141px;width:332px;height:101px;background:#d2d9dd;border-right:1px solid #000;border-bottom:1px solid #000;box-shadow:inset 1px 1px #fff, inset -1px -1px #8a969c"></div>
<div class="a" style="left:413px;top:145px;width:325px;height:15px;background:linear-gradient(90deg,#000 0%,#101c26 20%,#3c5c78 65%,#6890b4 100%)"></div>
<div class="t" style="left:415px;top:148px;font-weight:bold;font-size:11.5px;color:#eef8f8;letter-spacing:0.3px">Hinweise</div>
<div class="a" style="left:723px;top:147px;width:13px;height:11px;background:#d2d9dd;border-right:1px solid #000;border-bottom:1px solid #000;box-shadow:inset 1px 1px #fff"></div>
<svg width="771" height="652"><path d="M726.5,149.5 L732.5,155.5 M732.5,149.5 L726.5,155.5" stroke="#000" stroke-width="1.6"/></svg>
<div class="a" style="left:416px;top:163px;width:320px;height:74px;background:#fff;border:1px solid #000"></div>
<div class="t" style="left:422.5px;top:173px;font-weight:bold;font-size:12px;color:#10108a;letter-spacing:0">Punkt entfernen</div>
<div class="a" style="left:422px;top:195px;width:308px;height:2px;background:#10108a"></div>
<div class="t" style="left:422px;top:202px;font-size:11px;letter-spacing:-0.25px">Entfernt markierte Umformpunkte.</div>

<!-- context menu -->
<div class="a" style="left:346px;top:417px;width:134px;height:229px;background:#d2d9dd;border-right:1px solid #000;border-bottom:1px solid #000;box-shadow:inset 1px 1px #fff, inset -1px -1px #8a969c"></div>
<div class="a" style="left:349px;top:506px;width:128px;height:17px;background:#4b535a"></div>
<div class="a" style="left:350px;top:457px;width:126px;height:1px;background:#8a969c;box-shadow:0 1px #fff"></div>
<div class="a" style="left:350px;top:483px;width:126px;height:1px;background:#8a969c;box-shadow:0 1px #fff"></div>
<div class="a" style="left:350px;top:560px;width:126px;height:1px;background:#8a969c;box-shadow:0 1px #fff"></div>
<div class="a" style="left:350px;top:603px;width:126px;height:1px;background:#8a969c;box-shadow:0 1px #fff"></div>
<svg width="771" height="652" fill="none" stroke="#000" stroke-width="2">
<path d="M354,427.5 L356.5,430.5 L360.5,424.5"/>
<path d="M354,470.5 L356.5,473.5 L360.5,467.5"/>
<path d="M354,573.5 L356.5,576.5 L360.5,570.5"/>
</svg>
<div class="t" style="left:365px;top:423px">Punkt umgestalten</div>
<div class="t" style="left:365px;top:440px">Kurve umgestalten</div>
<div class="t" style="left:365px;top:466px">Drahtmodell</div>
<div class="t" style="left:365px;top:492px">Punkt hinzufügen</div>
<div class="t" style="left:365px;top:509px;color:#fff">Punkt entfernen</div>
<div class="t" style="left:365px;top:526px;color:#8e9ca4">Punkte verbinden</div>
<div class="t" style="left:365px;top:543px">Segment</div>
<div class="t" style="left:365px;top:569px">Ecke</div>
<div class="t" style="left:365px;top:586px">Symmetrisch</div>
<div class="t" style="left:365px;top:612px;color:#8e9ca4">Spitze entsperren</div>
<div class="t" style="left:365px;top:629px;color:#8e9ca4">Spitze sperren</div>
<!-- cursor -->
<svg width="771" height="652" shape-rendering="crispEdges"><rect x="399" y="517" width="1" height="1" fill="#000"/><rect x="399" y="518" width="1" height="1" fill="#000"/><rect x="400" y="518" width="1" height="1" fill="#000"/><rect x="399" y="519" width="1" height="1" fill="#000"/><rect x="400" y="519" width="1" height="1" fill="#fff"/><rect x="401" y="519" width="1" height="1" fill="#000"/><rect x="399" y="520" width="1" height="1" fill="#000"/><rect x="400" y="520" width="1" height="1" fill="#fff"/><rect x="401" y="520" width="1" height="1" fill="#fff"/><rect x="402" y="520" width="1" height="1" fill="#000"/><rect x="399" y="521" width="1" height="1" fill="#000"/><rect x="400" y="521" width="1" height="1" fill="#fff"/><rect x="401" y="521" width="1" height="1" fill="#fff"/><rect x="402" y="521" width="1" height="1" fill="#fff"/><rect x="403" y="521" width="1" height="1" fill="#000"/><rect x="399" y="522" width="1" height="1" fill="#000"/><rect x="400" y="522" width="1" height="1" fill="#fff"/><rect x="401" y="522" width="1" height="1" fill="#fff"/><rect x="402" y="522" width="1" height="1" fill="#fff"/><rect x="403" y="522" width="1" height="1" fill="#fff"/><rect x="404" y="522" width="1" height="1" fill="#000"/><rect x="399" y="523" width="1" height="1" fill="#000"/><rect x="400" y="523" width="1" height="1" fill="#fff"/><rect x="401" y="523" width="1" height="1" fill="#fff"/><rect x="402" y="523" width="1" height="1" fill="#fff"/><rect x="403" y="523" width="1" height="1" fill="#fff"/><rect x="404" y="523" width="1" height="1" fill="#fff"/><rect x="405" y="523" width="1" height="1" fill="#000"/><rect x="399" y="524" width="1" height="1" fill="#000"/><rect x="400" y="524" width="1" height="1" fill="#fff"/><rect x="401" y="524" width="1" height="1" fill="#fff"/><rect x="402" y="524" width="1" height="1" fill="#fff"/><rect x="403" y="524" width="1" height="1" fill="#fff"/><rect x="404" y="524" width="1" height="1" fill="#fff"/><rect x="405" y="524" width="1" height="1" fill="#fff"/><rect x="406" y="524" width="1" height="1" fill="#000"/><rect x="399" y="525" width="1" height="1" fill="#000"/><rect x="400" y="525" width="1" height="1" fill="#fff"/><rect x="401" y="525" width="1" height="1" fill="#fff"/><rect x="402" y="525" width="1" height="1" fill="#fff"/><rect x="403" y="525" width="1" height="1" fill="#fff"/><rect x="404" y="525" width="1" height="1" fill="#fff"/><rect x="405" y="525" width="1" height="1" fill="#fff"/><rect x="406" y="525" width="1" height="1" fill="#fff"/><rect x="407" y="525" width="1" height="1" fill="#000"/><rect x="399" y="526" width="1" height="1" fill="#000"/><rect x="400" y="526" width="1" height="1" fill="#fff"/><rect x="401" y="526" width="1" height="1" fill="#fff"/><rect x="402" y="526" width="1" height="1" fill="#fff"/><rect x="403" y="526" width="1" height="1" fill="#fff"/><rect x="404" y="526" width="1" height="1" fill="#fff"/><rect x="405" y="526" width="1" height="1" fill="#fff"/><rect x="406" y="526" width="1" height="1" fill="#fff"/><rect x="407" y="526" width="1" height="1" fill="#fff"/><rect x="408" y="526" width="1" height="1" fill="#000"/><rect x="399" y="527" width="1" height="1" fill="#000"/><rect x="400" y="527" width="1" height="1" fill="#fff"/><rect x="401" y="527" width="1" height="1" fill="#fff"/><rect x="402" y="527" width="1" height="1" fill="#fff"/><rect x="403" y="527" width="1" height="1" fill="#fff"/><rect x="404" y="527" width="1" height="1" fill="#fff"/><rect x="405" y="527" width="1" height="1" fill="#fff"/><rect x="406" y="527" width="1" height="1" fill="#fff"/><rect x="407" y="527" width="1" height="1" fill="#fff"/><rect x="408" y="527" width="1" height="1" fill="#fff"/><rect x="409" y="527" width="1" height="1" fill="#000"/><rect x="399" y="528" width="1" height="1" fill="#000"/><rect x="400" y="528" width="1" height="1" fill="#fff"/><rect x="401" y="528" width="1" height="1" fill="#fff"/><rect x="402" y="528" width="1" height="1" fill="#fff"/><rect x="403" y="528" width="1" height="1" fill="#fff"/><rect x="404" y="528" width="1" height="1" fill="#fff"/><rect x="405" y="528" width="1" height="1" fill="#fff"/><rect x="406" y="528" width="1" height="1" fill="#000"/><rect x="407" y="528" width="1" height="1" fill="#000"/><rect x="408" y="528" width="1" height="1" fill="#000"/><rect x="409" y="528" width="1" height="1" fill="#000"/><rect x="410" y="528" width="1" height="1" fill="#000"/><rect x="399" y="529" width="1" height="1" fill="#000"/><rect x="400" y="529" width="1" height="1" fill="#fff"/><rect x="401" y="529" width="1" height="1" fill="#fff"/><rect x="402" y="529" width="1" height="1" fill="#fff"/><rect x="403" y="529" width="1" height="1" fill="#000"/><rect x="404" y="529" width="1" height="1" fill="#fff"/><rect x="405" y="529" width="1" height="1" fill="#fff"/><rect x="406" y="529" width="1" height="1" fill="#000"/><rect x="399" y="530" width="1" height="1" fill="#000"/><rect x="400" y="530" width="1" height="1" fill="#fff"/><rect x="401" y="530" width="1" height="1" fill="#fff"/><rect x="402" y="530" width="1" height="1" fill="#000"/><rect x="404" y="530" width="1" height="1" fill="#000"/><rect x="405" y="530" width="1" height="1" fill="#fff"/><rect x="406" y="530" width="1" height="1" fill="#fff"/><rect x="407" y="530" width="1" height="1" fill="#000"/><rect x="399" y="531" width="1" height="1" fill="#000"/><rect x="400" y="531" width="1" height="1" fill="#fff"/><rect x="401" y="531" width="1" height="1" fill="#000"/><rect x="404" y="531" width="1" height="1" fill="#000"/><rect x="405" y="531" width="1" height="1" fill="#fff"/><rect x="406" y="531" width="1" height="1" fill="#fff"/><rect x="407" y="531" width="1" height="1" fill="#000"/><rect x="399" y="532" width="1" height="1" fill="#000"/><rect x="400" y="532" width="1" height="1" fill="#000"/><rect x="405" y="532" width="1" height="1" fill="#000"/><rect x="406" y="532" width="1" height="1" fill="#fff"/><rect x="407" y="532" width="1" height="1" fill="#fff"/><rect x="408" y="532" width="1" height="1" fill="#000"/><rect x="399" y="533" width="1" height="1" fill="#000"/><rect x="405" y="533" width="1" height="1" fill="#000"/><rect x="406" y="533" width="1" height="1" fill="#fff"/><rect x="407" y="533" width="1" height="1" fill="#fff"/><rect x="408" y="533" width="1" height="1" fill="#000"/><rect x="406" y="534" width="1" height="1" fill="#000"/><rect x="407" y="534" width="1" height="1" fill="#fff"/><rect x="408" y="534" width="1" height="1" fill="#fff"/><rect x="409" y="534" width="1" height="1" fill="#000"/><rect x="406" y="535" width="1" height="1" fill="#000"/><rect x="407" y="535" width="1" height="1" fill="#fff"/><rect x="408" y="535" width="1" height="1" fill="#fff"/><rect x="409" y="535" width="1" height="1" fill="#000"/><rect x="407" y="536" width="1" height="1" fill="#000"/><rect x="408" y="536" width="1" height="1" fill="#000"/></svg>
</body></html>
